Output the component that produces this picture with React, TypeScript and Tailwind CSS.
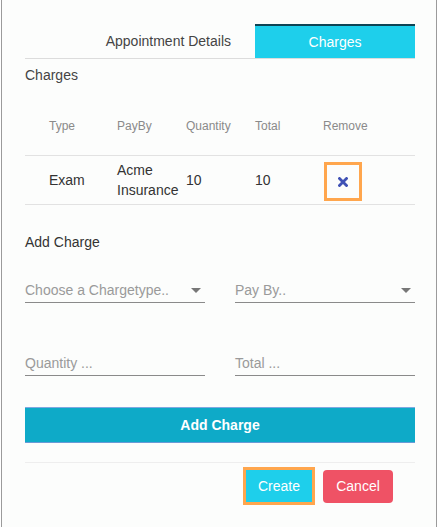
const font = { fontFamily: '"Liberation Sans", Arial, sans-serif' };

const SelectField = ({ placeholder }: { placeholder: string }) => (
  <div className="flex h-[24px] items-center justify-between border-b border-[#8a8a8a] text-[14px] text-[#9a9a9a]">
    <span>{placeholder}</span>
    <svg width="10" height="6" viewBox="0 0 10 6" className="mr-[4px]">
      <path d="M0 0 L10 0 L5 5 Z" fill="#777" />
    </svg>
  </div>
);

const InputField = ({ placeholder }: { placeholder: string }) => (
  <div className="flex h-[25px] items-center border-b border-[#8a8a8a] text-[14px] text-[#9a9a9a]">
    <span>{placeholder}</span>
  </div>
);

const App = () => {
  return (
    <div className="h-[527px] w-[440px] overflow-hidden bg-white" style={font}>
      <div className="ml-[1px] h-[527px] w-[436px] border-x border-[#9b9b9b] bg-[#fcfdfc] pl-[23px] pr-[21px] pt-[24px]">
        {/* tabs */}
        <div className="flex h-[35px] justify-end border-b border-[#dcdcdc]">
          <div className="flex min-w-[160px] items-center justify-center px-[24px] text-[14px] text-[#444]">
            Appointment Details
          </div>
          <div className="flex min-w-[160px] items-center justify-center border-t-2 border-[#0d4454] bg-[#1ecfeb] px-[24px] text-[14px] text-white">
            Charges
          </div>
        </div>

        <div className="mt-[8px] text-[14px] leading-4 text-[#444]">Charges</div>

        {/* table */}
        <div className="mt-[35px] grid grid-cols-[68px_69px_69px_68px_1fr] pb-[21px] pl-[24px] text-[12px] leading-4 text-[#8a8a8a]">
          <span>Type</span>
          <span>PayBy</span>
          <span>Quantity</span>
          <span>Total</span>
          <span>Remove</span>
        </div>
        <div className="grid h-[50px] grid-cols-[68px_69px_69px_68px_1fr] items-center border-y border-[#e2e2e2] pl-[24px] text-[14px] text-[#333]">
          <span>Exam</span>
          <span className="leading-5">Acme Insurance</span>
          <span>10</span>
          <span>10</span>
          <div>
            <button className="ml-[1px] mt-[3px] flex h-[39px] w-[38px] items-center justify-center border-[3px] border-[#ffa64d]">
              <svg width="10" height="10" viewBox="0 0 10 10">
                <path d="M1.5 1.5 L8.5 8.5 M8.5 1.5 L1.5 8.5" stroke="#3f51b5" strokeWidth="2.8" strokeLinecap="square" />
              </svg>
            </button>
          </div>
        </div>

        <div className="mt-[29px] text-[14px] leading-4 text-[#333]">Add Charge</div>

        <div className="mt-[29px] grid grid-cols-2 gap-x-[30px]">
          <SelectField placeholder="Choose a Chargetype.." />
          <SelectField placeholder="Pay By.." />
        </div>

        <div className="mt-[48px] grid grid-cols-2 gap-x-[30px]">
          <InputField placeholder="Quantity ..." />
          <InputField placeholder="Total ..." />
        </div>

        <button className="mt-[31px] flex h-[36px] w-full items-center justify-center border-y border-t-[#7fa8e0] border-b-[#6a9ad6] bg-[#0eaac8] text-[14px] font-bold text-white">
          Add Charge
        </button>

        <div className="mt-[19px] flex items-center justify-end gap-[8px] border-t border-[#eeeeee] pr-[22px] pt-[4px]">
          <button className="flex h-[38px] w-[72px] items-center justify-center border-[3px] border-[#ffa64d] bg-[#1ecfeb] text-[14px] text-white">
            Create
          </button>
          <button className="flex h-[33px] w-[70px] items-center justify-center rounded-[4px] bg-[#ef5265] text-[14px] text-white">
            Cancel
          </button>
        </div>
      </div>
    </div>
  );
};

export default App;
